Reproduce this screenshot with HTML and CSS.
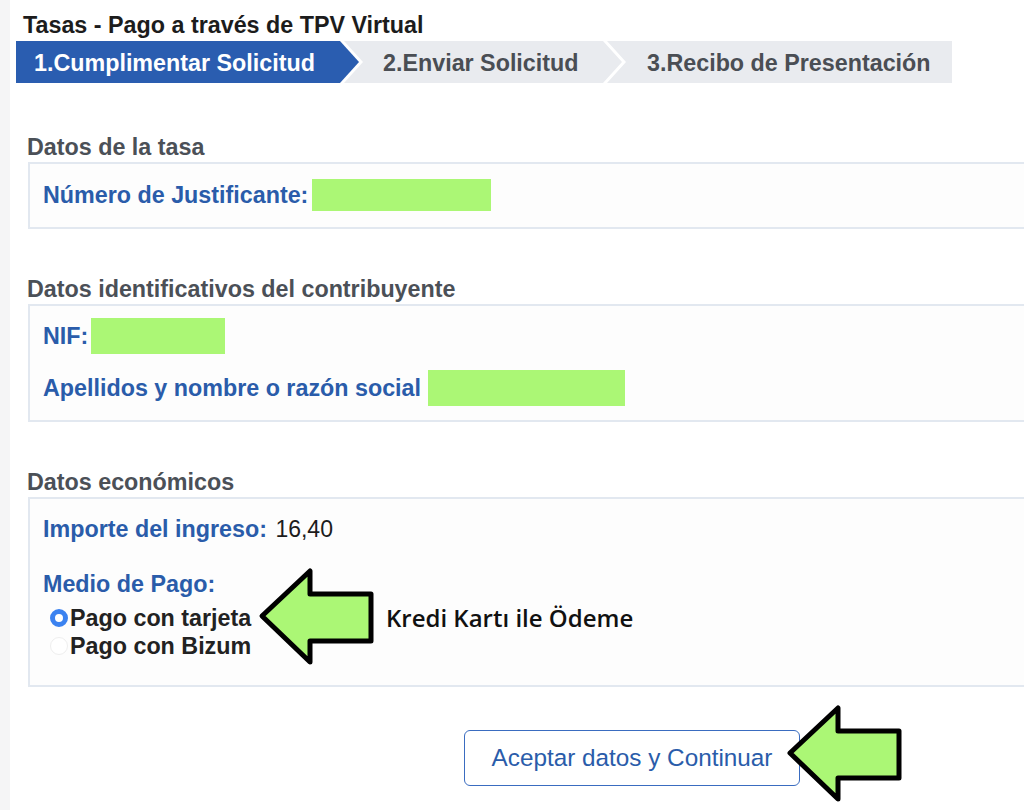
FILE: index.html
```html
<!DOCTYPE html>
<html lang="es">
<head>
    <meta charset="UTF-8">
    <title>Tasas - Pago a través de TPV Virtual</title>
    <link rel="stylesheet" href="styles.css">
</head>
<body>
    <div class="page">
        <h1 class="title">Tasas - Pago a través de TPV Virtual</h1>

        <div class="steps">
            <div class="step step-1">1.Cumplimentar Solicitud</div>
            <div class="step step-2">2.Enviar Solicitud</div>
            <div class="step step-3">3.Recibo de Presentación</div>
        </div>

        <div class="section first">
            <h2 class="section-title">Datos de la tasa</h2>
            <div class="box box-tasa">
                <div class="row">
                    <span class="label">Número de Justificante:</span>
                    <span class="hidden-value w-justificante"></span>
                </div>
            </div>
        </div>

        <div class="section">
            <h2 class="section-title">Datos identificativos del contribuyente</h2>
            <div class="box box-contribuyente">
                <div class="row">
                    <span class="label">NIF:</span>
                    <span class="hidden-value w-nif"></span>
                </div>
                <div class="row row-gap">
                    <span class="label">Apellidos y nombre o razón social</span>
                    <span class="hidden-value w-nombre"></span>
                </div>
            </div>
        </div>

        <div class="section">
            <h2 class="section-title">Datos económicos</h2>
            <div class="box box-economicos">
                <div class="line">
                    <span class="label">Importe del ingreso:</span> <span class="amount">16,40</span>
                </div>
                <div class="line medio">
                    <span class="label">Medio de Pago:</span>
                </div>
                <div class="payment">
                    <div class="option">
                        <span class="radio checked"></span>
                        <span>Pago con tarjeta</span>
                    </div>
                    <div class="option">
                        <span class="radio"></span>
                        <span>Pago con Bizum</span>
                    </div>

                    <svg class="arrow arrow-pay" viewBox="0 0 120 100">
                        <path d="M6 50 L54 5 L54 28 L115 28 L115 75 L54 75 L54 96 Z"/>
                    </svg>
                    <span class="note">Kredi Kartı ile Ödeme</span>
                </div>
            </div>
        </div>

        <div class="actions">
            <button class="btn-continue">Aceptar datos y Continuar</button>
            <svg class="arrow arrow-btn" viewBox="0 0 120 100">
                <path d="M6 50 L54 5 L54 28 L115 28 L115 75 L54 75 L54 96 Z"/>
            </svg>
        </div>
    </div>
</body>
</html>
```

FILE: styles.css
```css
body {
    margin: 0;
    background-color: #f5f5f6;
    font-family: "Liberation Sans", Arial, sans-serif;
    overflow: hidden;
}
.page {
    margin-left: 10px;
    background-color: #fff;
    min-height: 810px;
    padding-top: 13px;
}
.title {
    margin: 0 0 4px 13px;
    font-size: 23.3px;
    line-height: 24px;
    color: #1c1c1c;
}

/* steps bar */
.steps {
    display: flex;
    width: 936px;
    height: 42px;
    margin-left: 6px;
    background-color: #e9ebef;
    font-size: 23.3px;
    font-weight: bold;
    color: #4a4e54;
}
.step {
    position: relative;
    display: flex;
    align-items: center;
    box-sizing: border-box;
    padding-top: 3px;
    white-space: nowrap;
}
.step-1 {
    width: 324px;
    padding-left: 18px;
    background-color: #2a5db0;
    color: #fff;
    z-index: 1;
}
.step-1::before,
.step-1::after {
    content: "";
    position: absolute;
    top: 0;
    left: 100%;
    height: 42px;
}
.step-1::before {
    width: 23px;
    background-color: #fff;
    clip-path: polygon(0 0, 4px 0, 100% 50%, 4px 100%, 0 100%);
}
.step-1::after {
    width: 19px;
    background-color: #2a5db0;
    clip-path: polygon(0 0, 100% 50%, 0 100%);
}
.step-2 {
    width: 266px;
    padding-left: 43px;
}
.step-2::after {
    content: "";
    position: absolute;
    top: 0;
    left: calc(100% - 3px);
    width: 23px;
    height: 42px;
    background-color: #fff;
    clip-path: polygon(0 0, 4px 0, 100% 50%, 4px 100%, 0 100%, 19px 50%);
}
.step-3 {
    padding-left: 41px;
}

/* sections */
.section {
    margin-left: 18px;
    margin-top: 48px;
}
.section.first {
    margin-top: 52px;
}
.section-title {
    margin: 0 0 3px -1px;
    font-size: 23.3px;
    line-height: 24px;
    color: #4b5057;
}
.box {
    border: 2px solid #e2e8f0;
    border-right: none;
    background-color: #fdfdfd;
    padding: 0 13px;
}
.box-tasa {
    padding-top: 15px;
    padding-bottom: 16px;
}
.box-contribuyente {
    padding-top: 12px;
    padding-bottom: 14px;
}
.box-economicos {
    padding-top: 16px;
    padding-bottom: 25px;
}
.row {
    display: flex;
    align-items: center;
    height: 36px;
}
.box-tasa .row {
    height: 32px;
}
.row-gap {
    margin-top: 16px;
}
.label {
    font-size: 23.3px;
    font-weight: bold;
    color: #2a5caa;
}
.hidden-value {
    display: inline-block;
    height: 100%;
    background-color: #abf775;
}
.w-justificante {
    width: 179px;
    margin-left: 4px;
}
.w-nif {
    width: 134px;
    margin-left: 3px;
}
.w-nombre {
    width: 197px;
    margin-left: 7px;
}
.line {
    line-height: 28px;
}
.amount {
    margin-left: 4px;
    font-size: 23px;
    color: #1c1c1c;
}
.medio {
    margin-top: 24px;
}

/* payment options */
.payment {
    position: relative;
    margin-top: 3px;
    padding-left: 7px;
}
.option {
    display: flex;
    align-items: center;
    height: 28px;
    font-size: 23.3px;
    font-weight: bold;
    color: #222;
}
.radio {
    width: 18px;
    height: 18px;
    margin-right: 2px;
    border-radius: 50%;
    box-sizing: border-box;
    border: 1px solid #eeeeee;
    background-color: #fff;
}
.radio.checked {
    border: 5px solid #3b82f0;
    background-color: #fff;
}
.note {
    position: absolute;
    left: 343px;
    top: 0;
    line-height: 28px;
    font-family: "Open Sans", sans-serif;
    font-size: 24px;
    font-weight: 600;
    color: #111;
}
.arrow path {
    fill: #abf775;
    stroke: #000;
    stroke-width: 5;
    stroke-linejoin: round;
}
.arrow-pay {
    position: absolute;
    left: 213px;
    top: -38px;
    width: 120px;
    height: 100px;
}

/* button */
.actions {
    position: relative;
    margin: 43px 0 0 454px;
}
.btn-continue {
    width: 336px;
    height: 56px;
    border: 1px solid #3a6cc0;
    border-radius: 6px;
    background-color: #fff;
    font-family: "Liberation Sans", Arial, sans-serif;
    font-size: 24.3px;
    color: #2a5caa;
    cursor: pointer;
}
.arrow-btn {
    position: absolute;
    left: 319px;
    top: -27px;
    width: 122px;
    height: 100px;
}
```
